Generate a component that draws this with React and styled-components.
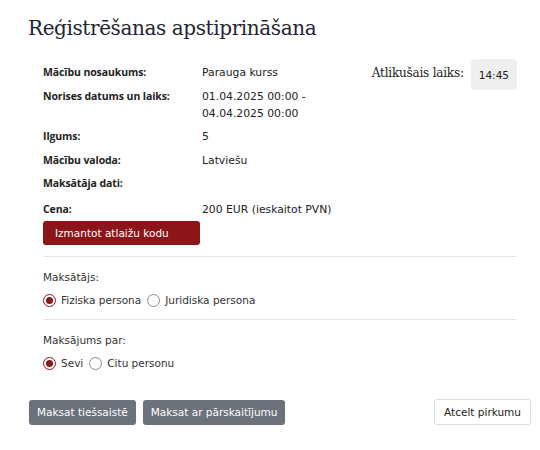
import React from "react";
import styled, { createGlobalStyle } from "styled-components";

const Global = createGlobalStyle`
body {
    margin: 0;
    background: #ffffff;
    font-family: "DejaVu Sans", Verdana, sans-serif;
    color: #222222;
}
`;

const Page = styled.div`
width: 540px;
height: 450px;
padding: 12px 9px 0 29px;
box-sizing: border-box;
`;

const Title = styled.h1`
font-family: "DejaVu Serif", "Liberation Serif", serif;
font-weight: normal;
font-size: 20px;
letter-spacing: -0.4px;
color: #1f2430;
margin: 0 0 20px -1px;
line-height: 32px;
`;

const Body = styled.div`
padding: 0 14px;
`;

const Top = styled.div`
display: flex;
justify-content: space-between;
align-items: flex-start;
`;

const Details = styled.div`
display: flex;
flex-direction: column;
gap: 6.5px;
`;

const Row = styled.div`
display: grid;
grid-template-columns: 159px 1fr;
font-size: 10.8px;
line-height: 17px;
margin-top: ${p => p.$extra || 0}px;
`;

const Label = styled.div`
font-family: "Open Sans", sans-serif;
font-weight: 700;
font-size: 10.5px;
letter-spacing: -0.1px;
color: #222;
`;

const Value = styled.div`
color: #222;
`;

const Timer = styled.div`
display: flex;
align-items: center;
gap: 7px;
margin-top: -5px;
`;

const TimerLabel = styled.span`
font-family: "DejaVu Serif", "Liberation Serif", serif;
font-size: 12px;
letter-spacing: -0.2px;
color: #222;
margin-top: -3px;
`;

const TimerBox = styled.span`
background: #efefef;
border-radius: 4px;
padding: 0 8px;
height: 31px;
display: flex;
align-items: center;
font-size: 10.5px;
`;

const RedButton = styled.button`
margin-top: -3px;
width: 157px;
height: 24px;
background: #8c1519;
color: #ffffff;
border: none;
border-radius: 3px;
font-family: inherit;
font-size: 10.5px;
text-align: left;
padding: 0 12px;
`;

const Divider = styled.hr`
border: none;
border-top: 1px solid #e6e6e6;
margin: ${p => p.$top}px 0 0 0;
`;

const Group = styled.div`
padding-top: ${p => p.$top || 10}px;
`;

const GroupLabel = styled.div`
font-size: 10.5px;
line-height: 17px;
color: #333;
`;

const Options = styled.div`
display: flex;
align-items: center;
gap: 6px;
margin-top: ${p => p.$top || 6}px;
height: 18px;
`;

const Option = styled.label`
display: flex;
align-items: center;
gap: 5px;
font-size: 10.5px;
color: #333;
`;

const Radio = styled.span`
width: 13px;
height: 13px;
border-radius: 50%;
box-sizing: border-box;
border: 1px solid ${p => (p.$on ? "#8c1519" : "#8a8a8a")};
display: flex;
align-items: center;
justify-content: center;
&::after {
    content: "";
    width: 7px;
    height: 7px;
    border-radius: 50%;
    background: ${p => (p.$on ? "#8c1519" : "transparent")};
}
`;

const Actions = styled.div`
display: flex;
align-items: center;
gap: 7px;
margin-top: 27px;
`;

const GreyButton = styled.button`
height: 25px;
padding: 0 8px;
background: #6c717b;
color: #ffffff;
border: none;
border-radius: 3px;
font-family: inherit;
font-size: 10.5px;
`;

const CancelButton = styled.button`
margin-left: auto;
height: 26px;
padding: 0 9px;
background: #ffffff;
color: #222;
border: 1px solid #dddddd;
border-radius: 3px;
font-family: inherit;
font-size: 10.5px;
`;

const rows = [
    ["Mācību nosaukums:", "Parauga kurss"],
    ["Norises datums un laiks:", "01.04.2025 00:00 -\n04.04.2025 00:00"],
    ["Ilgums:", "5"],
    ["Mācību valoda:", "Latviešu"],
    ["Maksātāja dati:", ""],
    ["Cena:", "200 EUR (ieskaitot PVN)"],
];

const App = () => {
    return (
        <Page>
            <Global />
            <Title>Reģistrēšanas apstiprināšana</Title>
            <Body>
                <Top>
                    <Details>
                        {rows.map(([l, v], i) => (
                            <Row key={i} $extra={i === 5 ? 2 : 0}>
                                <Label>{l}</Label>
                                <Value>
                                    {v.split("\n").map((line, j) => (
                                        <div key={j}>{line}</div>
                                    ))}
                                </Value>
                            </Row>
                        ))}
                        <RedButton>Izmantot atlaižu kodu</RedButton>
                    </Details>
                    <Timer>
                        <TimerLabel>Atlikušais laiks:</TimerLabel>
                        <TimerBox>14:45</TimerBox>
                    </Timer>
                </Top>
                <Divider $top={11} />
                <Group $top={12}>
                    <GroupLabel>Maksātājs:</GroupLabel>
                    <Options $top={5}>
                        <Option><Radio $on />Fiziska persona</Option>
                        <Option><Radio />Juridiska persona</Option>
                    </Options>
                </Group>
                <Divider $top={10} />
                <Group $top={12}>
                    <GroupLabel>Maksājums par:</GroupLabel>
                    <Options $top={5}>
                        <Option><Radio $on />Sevi</Option>
                        <Option><Radio />Citu personu</Option>
                    </Options>
                </Group>
            </Body>
            <Actions>
                <GreyButton>Maksat tiešsaistē</GreyButton>
                <GreyButton>Maksat ar pārskaitījumu</GreyButton>
                <CancelButton>Atcelt pirkumu</CancelButton>
            </Actions>
        </Page>
    );
};

export default App;
